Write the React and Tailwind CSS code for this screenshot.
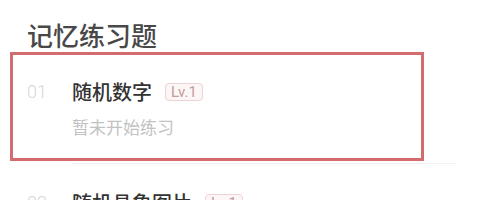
import React from "react";

const items = [
  { no: "01", name: "随机数字", level: "Lv.1", status: "暂未开始练习" },
  { no: "02", name: "随机具象图片", level: "Lv.1", status: "暂未开始练习" },
];

const Row = ({ item }) => (
  <div className="flex pt-[25px]">
    <div className="w-[45px] shrink-0 text-[18px] leading-[28px] text-[#d6d6d6] font-['Roboto',sans-serif] font-light">
      {item.no}
    </div>
    <div className="flex-1 border-b border-[#f2f2f2] pb-[24px]">
      <div className="flex items-center h-[28px]">
        <span className="text-[20px] font-medium text-[#333333]">{item.name}</span>
        <span className="ml-[13px] h-[18px] px-[5px] rounded-[4px] border border-[#efd3d3] bg-[#fdf6f6] text-[15px] leading-[16px] text-[#c49c9c] font-['Roboto',sans-serif]">
          {item.level}
        </span>
      </div>
      <div className="mt-[9px] text-[17px] leading-[24px] text-[#c2c2c2]">
        {item.status}
      </div>
    </div>
  </div>
);

export default function App() {
  return (
    <div className="relative w-[477px] h-[200px] overflow-hidden bg-white pl-[27px] pr-[20px] font-['Noto_Sans_CJK_SC','Noto_Sans',sans-serif]">
      <h1 className="pt-[17px] text-[26px] leading-[36px] font-medium text-[#484848]">
        记忆练习题
      </h1>
      {items.map((item) => (
        <Row key={item.no} item={item} />
      ))}
      <div className="absolute left-[10px] top-[52px] w-[414px] h-[109px] border-[3px] border-[#d26c6f] pointer-events-none" />
    </div>
  );
}
